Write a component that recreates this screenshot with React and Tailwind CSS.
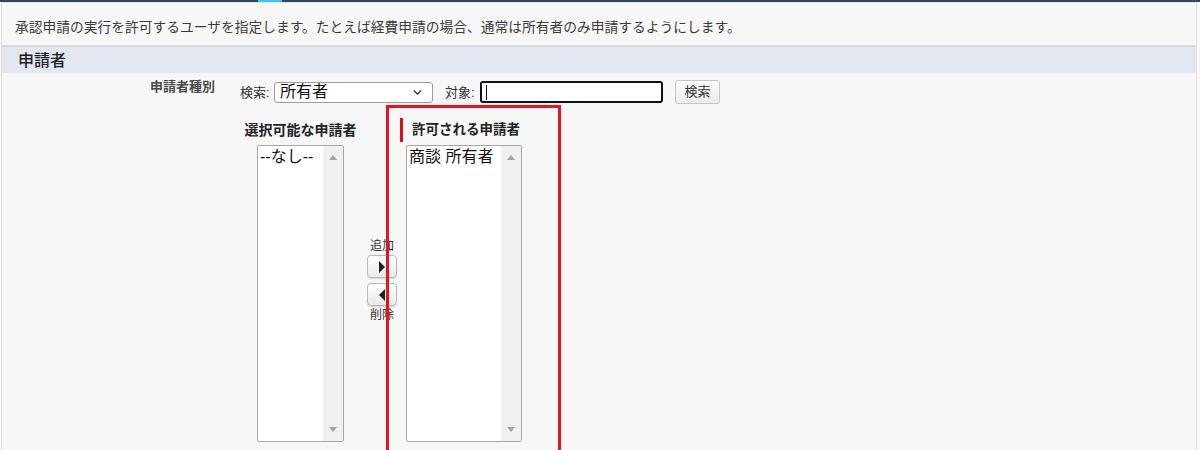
import React from "react";
import { ChevronDown } from "lucide-react";

const jp = "font-['Liberation_Sans','Noto_Sans_CJK_JP',sans-serif]";

const ScrollTrack = () => (
  <div className="w-[20px] h-full bg-[#f0f0f0] flex flex-col items-center justify-between py-[9px]">
    <div className="w-0 h-0 border-x-[4px] border-x-transparent border-b-[5px] border-b-[#a3a3a3]" />
    <div className="w-0 h-0 border-x-[4px] border-x-transparent border-t-[5px] border-t-[#a3a3a3]" />
  </div>
);

const ListBox = ({ width, items }) => (
  <div
    className={`h-[297px] bg-white border border-[#a6a6a6] rounded-[2px] flex overflow-hidden ${width}`}
  >
    <div className="flex-1 pl-[2px] pt-[1px] text-[16px] leading-[19px] text-[#111]">
      {items.map((item, i) => (
        <div key={i} className="whitespace-nowrap">
          {item}
        </div>
      ))}
    </div>
    <ScrollTrack />
  </div>
);

const MoveButton = ({ dir }) => (
  <div className="w-[30px] h-[23px] rounded-[4px] border border-[#b9b9b9] bg-gradient-to-b from-[#ffffff] to-[#e9e9e9] shadow-[0_1px_1px_rgba(0,0,0,0.15)] flex items-center justify-center">
    {dir === "right" ? (
      <div className="w-0 h-0 border-y-[6px] border-y-transparent border-l-[6px] border-l-[#1f1f1f]" />
    ) : (
      <div className="w-0 h-0 border-y-[6px] border-y-transparent border-r-[6px] border-r-[#1f1f1f]" />
    )}
  </div>
);

export default function App() {
  return (
    <div className={`w-[1200px] h-[450px] overflow-hidden bg-[#f7f7f7] ${jp}`}>
      {/* top strip */}
      <div className="h-[2px] flex bg-[#33475b]">
        <div className="w-[258px]" />
        <div className="w-[24px] bg-[#3fc7e8]" />
      </div>

      <div className="ml-[1px] w-[1196px] h-[448px] border-x border-t border-[#e3e3e3]">
        {/* description */}
        <div className="h-[42px] pl-[13px] pt-[15px] text-[13.75px] leading-[20px] text-[#3a3a3a] whitespace-nowrap">
          承認申請の実行を許可するユーザを指定します。たとえば経費申請の場合、通常は所有者のみ申請するようにします。
        </div>

        {/* section header */}
        <div className="border-t-2 border-[#d9d9d9] h-[28px] bg-[#e3e7f1] pl-[16px] pt-[4px] text-[16px] leading-[20px] font-medium text-[#1e1e1e]">
          申請者
        </div>

        {/* search row */}
        <div className="flex pt-[7px]">
          <div className="w-[213px] text-right text-[13px] leading-[14px] font-semibold text-[#4a4a4a]">
            申請者種別
          </div>
          <div className="ml-[25px] h-[24px] flex items-center text-[13px] text-[#333]">
            <span className="w-[34px] leading-[14px] pt-[1px]">検索:</span>
            <div className="w-[159px] h-[21px] bg-white border border-[#9c9c9c] rounded-[3px] flex items-center justify-between pl-[5px] pr-[8px]">
              <span className="text-[16px] leading-[18px] text-[#111]">所有者</span>
              <ChevronDown size={13} strokeWidth={2.6} className="text-[#222]" />
            </div>
            <span className="ml-[12px] w-[35px] leading-[14px] pt-[1px]">対象:</span>
            <div className="w-[183px] h-[22px] bg-white border-2 border-[#111] rounded-[3px] flex items-center pl-[4px]">
              <div className="w-[1px] h-[15px] bg-[#111]" />
            </div>
            <div className="ml-[12px] w-[45px] h-[24px] rounded-[3px] border border-[#c6c6c6] bg-gradient-to-b from-[#fdfdfd] to-[#ececec] flex items-center justify-center text-[13px] text-[#333]">
              検索
            </div>
          </div>
        </div>

        {/* picker */}
        <div className="relative mt-[14px] flex pl-[241px]">
          {/* available */}
          <div className="w-[115px] flex flex-col items-center">
            <div className="h-[24px] flex items-center text-[14px] font-bold text-[#222] whitespace-nowrap">
              選択可能な申請者
            </div>
            <div className="mt-[3px]">
              <ListBox width="w-[87px]" items={["--なし--"]} />
            </div>
          </div>

          {/* move buttons */}
          <div className="ml-[9px] w-[30px] flex flex-col items-center pt-[121px] text-[12px] leading-[14px] text-[#333]">
            <span>追加</span>
            <div className="mt-[2px]">
              <MoveButton dir="right" />
            </div>
            <div className="mt-[5px]">
              <MoveButton dir="left" />
            </div>
            <span className="mt-[2px]">削除</span>
          </div>

          {/* selected */}
          <div className="ml-[3px] flex flex-col">
            <div className="h-[24px] flex items-center">
              <div className="w-[3px] h-[24px] bg-[#d3141c]" />
              <span className="ml-[9px] text-[13.5px] font-bold text-[#222]">
                許可される申請者
              </span>
            </div>
            <div className="mt-[3px] ml-[6px]">
              <ListBox width="w-[116px]" items={["商談 所有者"]} />
            </div>
          </div>

          {/* annotation box */}
          <div className="absolute left-[384px] top-[-13px] w-[175px] h-[400px] border-[3px] border-[#e8141d] pointer-events-none" />
        </div>
      </div>
    </div>
  );
}
